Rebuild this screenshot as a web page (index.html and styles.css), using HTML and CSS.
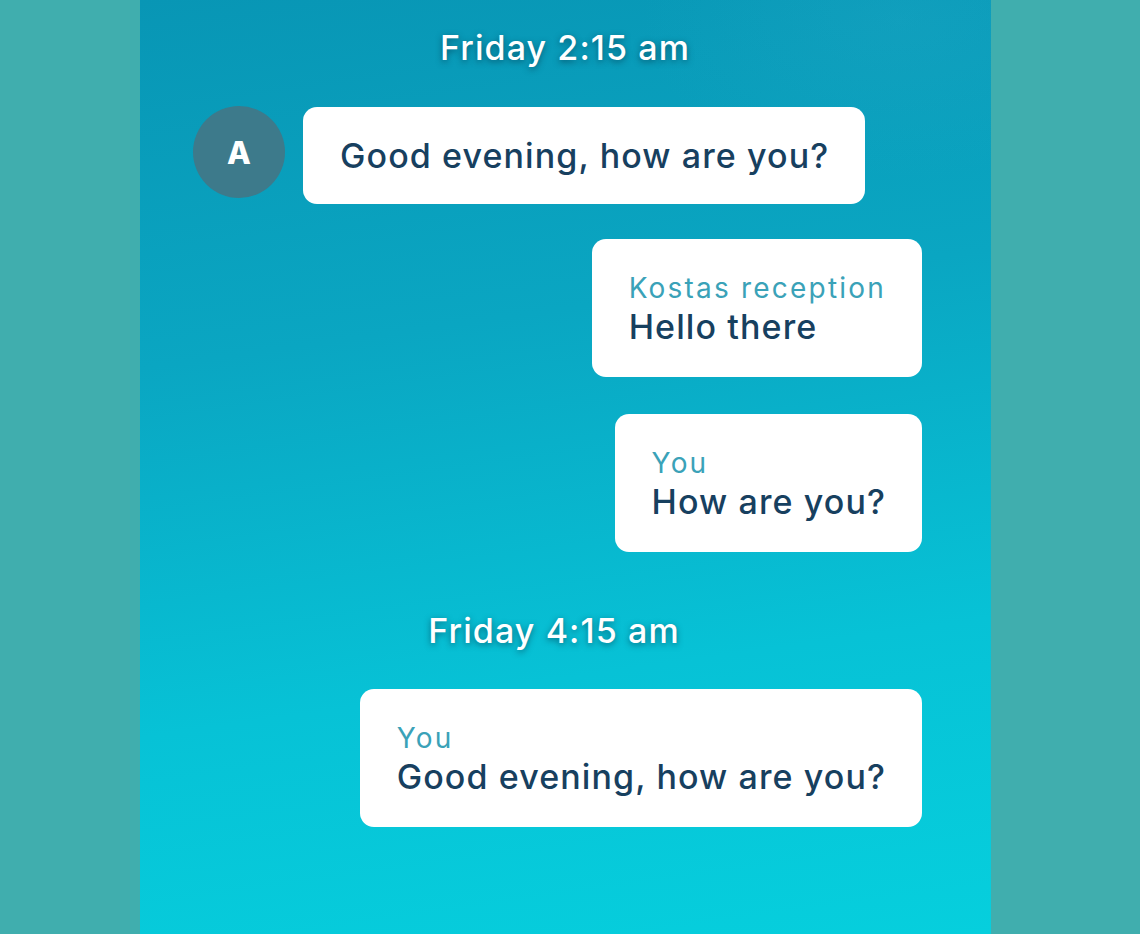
FILE: index.html
```html
<!DOCTYPE html>
<html lang="en">
<head>
<meta charset="utf-8">
<title>Chat</title>
<link rel="stylesheet" href="styles.css">
</head>
<body>
<div class="stage">
  <main class="phone">
    <div class="stamp stamp1">Friday 2:15 am</div>
    <div class="row row-in">
      <div class="avatar">A</div>
      <div class="bubble"><div class="text">Good evening, how are you?</div></div>
    </div>
    <div class="row row-out r2">
      <div class="bubble"><div class="name">Kostas reception</div><div class="text">Hello there</div></div>
    </div>
    <div class="row row-out r3">
      <div class="bubble"><div class="name">You</div><div class="text">How are you?</div></div>
    </div>
    <div class="stamp stamp2">Friday 4:15 am</div>
    <div class="row row-out r4">
      <div class="bubble"><div class="name">You</div><div class="text">Good evening, how are you?</div></div>
    </div>
  </main>
</div>
</body>
</html>
```
FILE: styles.css
```css
* { box-sizing: border-box; }
html, body { margin: 0; padding: 0; height: 100%; }
body {
  background: #40aeae;
  font-family: Inter, "Noto Sans", sans-serif;
}
.stage {
  display: flex;
  justify-content: flex-start;
  height: 934px;
  padding-left: 140px;
}
.phone {
  width: 851px;
  height: 934px;
  background:
    radial-gradient(ellipse 260px 160px at 760px 20px, rgba(40,170,200,0.25), rgba(40,170,200,0) 100%),
    linear-gradient(172deg, #0896b5 0%, #0aa6c2 35%, #07c2d6 70%, #06cfdd 100%);
  padding: 28px 69px 0 53px;
  display: flex;
  flex-direction: column;
}
.stamp {
  text-align: center;
  color: #ffffff;
  font-size: 34px;
  font-weight: 500;
  letter-spacing: 1.1px;
  line-height: 40px;
  text-shadow: 0 2px 6px rgba(0, 40, 60, 0.55);
}
.stamp1 { padding-left: 15px; }
.stamp2 {
  margin-top: 59px;
  padding-right: 7px;
}
.row { display: flex; align-items: flex-start; }
.row-in { margin-top: 39px; gap: 18px; }
.row-out { justify-content: flex-end; }
.r2 { margin-top: 35px; }
.r3 { margin-top: 37px; }
.r4 { margin-top: 38px; }
.avatar {
  width: 92px;
  height: 92px;
  margin-top: -1px;
  border-radius: 50%;
  background: #3d7a8b;
  color: #fff;
  font-weight: 800;
  font-size: 31px;
  display: flex;
  align-items: center;
  justify-content: center;
}
.bubble {
  background: #ffffff;
  border-radius: 14px;
  padding: 0 36px 0 37px;
  display: flex;
  flex-direction: column;
  justify-content: center;
}
.row-in .bubble { height: 97px; }
.row-out .bubble { height: 138px; }
.name {
  color: #3aa2b8;
  font-size: 28px;
  letter-spacing: 2.2px;
  line-height: 38px;
}
.text {
  color: #17405f;
  font-size: 34px;
  font-weight: 500;
  letter-spacing: 1.1px;
  line-height: 40px;
}
```
